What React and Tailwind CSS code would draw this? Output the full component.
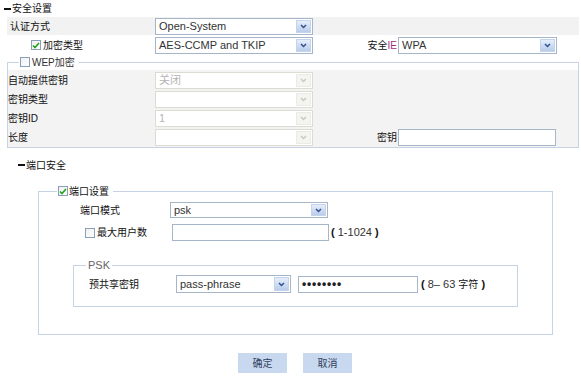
import React from 'react';

// collapse bar in front of a section title
function Dash() {
    return <span className="inline-block w-[7px] h-[2px] bg-[#111] mr-[1px]" />;
}

function Chevron({ disabled }) {
    return (
        <svg width="7" height="5" viewBox="0 0 7 5">
            <path d="M1 1l2.5 2.5L6 1" fill="none" stroke={disabled ? '#c9c9c2' : '#2f4f8f'} strokeWidth="1.5" />
        </svg>
    );
}

function Select({ className = '', value, disabled = false }) {
    return (
        <div className={`flex bg-white border ${disabled ? 'border-[#dcdcd3]' : 'border-[#a7b5c8]'} ${className}`}>
            <div className={`flex-1 flex items-center pl-[3px] text-[11px] ${disabled ? 'text-[#b4b4b4]' : 'text-[#333]'}`}>
                {value}
            </div>
            <div className="p-[1px] flex">
                <div
                    className={`w-[15px] flex items-center justify-center border ${
                        disabled
                            ? 'bg-[#f4f4f0] border-[#ebebe5]'
                            : 'bg-linear-to-b from-[#e6eefa] to-[#b8cceb] border-[#c4d4ec]'
                    }`}
                >
                    <Chevron disabled={disabled} />
                </div>
            </div>
        </div>
    );
}

function Input({ className = '', children }) {
    return (
        <div className={`flex items-center bg-white border border-[#a7b5c8] pl-[3px] ${className}`}>
            {children}
        </div>
    );
}

function Checkbox({ checked = false }) {
    return (
        <span className="w-[10px] h-[10px] border border-[#8a9fb8] bg-linear-to-br from-[#f0f0f0] to-white flex items-center justify-center shrink-0">
            {checked && (
                <svg width="8" height="7" viewBox="0 0 8 7">
                    <path d="M1 3.5l2 2L7 1" fill="none" stroke="#22a322" strokeWidth="1.7" />
                </svg>
            )}
        </span>
    );
}

export default function App() {
    return (
        <div className="w-[581px] h-[378px] bg-white overflow-hidden text-[10px] text-[#111] font-['Liberation_Sans','Noto_Sans_CJK_SC',sans-serif]">
            {/* 安全设置 */}
            <div className="h-[17px] pl-[4px] flex items-center">
                <Dash />
                <span>安全设置</span>
            </div>

            <div className="ml-[7px] w-[572px]">
                <div className="h-[18px] bg-[#f2f2f2] flex items-center">
                    <div className="w-[148px] pl-[3px]">认证方式</div>
                    <Select className="w-[158px] h-[17px]" value="Open-System" />
                </div>

                <div className="h-[20px] flex items-center">
                    <div className="w-[148px] pl-[24px] flex items-center gap-[2px]">
                        <Checkbox checked />
                        <span>加密类型</span>
                    </div>
                    <Select className="w-[158px] h-[17px]" value="AES-CCMP and TKIP" />
                    <div className="w-[85px] text-right pr-[1px]">
                        安全<span className="text-[#a0307f]">IE</span>
                    </div>
                    <Select className="w-[159px] h-[17px]" value="WPA" />
                </div>

                {/* WEP加密 */}
                <fieldset className="mt-[1px] border border-[#c6d3e4]">
                    <legend className="ml-[11px] pl-[1px] pr-[4px] h-[12px] flex items-center gap-[2px]">
                        <Checkbox />
                        <span className="text-[#333]">WEP加密</span>
                    </legend>
                    <div className="mt-[2px] pt-[1px] bg-[#f3f3f3]">
                        {[
                            ['自动提供密钥', '关闭'],
                            ['密钥类型', ''],
                            ['密钥ID', '1'],
                        ].map(([label, value]) => (
                            <div key={label} className="h-[19px] flex items-center">
                                <div className="w-[147px]">{label}</div>
                                <Select className="w-[158px] h-[17px]" value={value} disabled />
                            </div>
                        ))}
                        <div className="h-[19px] flex items-center">
                            <div className="w-[147px]">长度</div>
                            <Select className="w-[158px] h-[17px]" value="" disabled />
                            <div className="w-[85px] text-right pr-[1px]">密钥</div>
                            <Input className="w-[158px] h-[17px]" />
                        </div>
                    </div>
                </fieldset>
            </div>

            {/* 端口安全 */}
            <div className="mt-[10px] h-[14px] pl-[18px] flex items-center">
                <Dash />
                <span>端口安全</span>
            </div>

            <fieldset className="mt-[13px] ml-[38px] w-[515px] border border-[#c6d3e4] pb-[27px]">
                <legend className="ml-[18px] pl-[1px] pr-[4px] h-[12px] flex items-center gap-[1px]">
                    <Checkbox checked />
                    <span>端口设置</span>
                </legend>

                <div className="mt-[5px] h-[16px] flex items-center">
                    <div className="w-[131px] pl-[41px]">端口模式</div>
                    <Select className="w-[158px] h-[16px]" value="psk" />
                </div>

                <div className="mt-[6px] h-[17px] flex items-center">
                    <div className="w-[133px] pl-[46px] flex items-center gap-[2px]">
                        <Checkbox />
                        <span>最大用户数</span>
                    </div>
                    <Input className="w-[157px] h-[17px]" />
                    <span className="ml-[2px] text-[11px] text-[#333]">
                        <b className="text-[#111]">(</b> 1-1024 <b className="text-[#111]">)</b>
                    </span>
                </div>

                {/* PSK */}
                <fieldset className="mt-[18px] ml-[34px] w-[445px] border border-[#c6d3e4] pb-[13px]">
                    <legend className="ml-[12px] px-[2px] h-[12px] flex items-center text-[11px] text-[#666]">
                        PSK
                    </legend>
                    <div className="mt-[4px] h-[18px] flex items-center">
                        <div className="w-[102px] pl-[15px]">预共享密钥</div>
                        <Select className="w-[115px] h-[18px]" value="pass-phrase" />
                        <Input className="ml-[7px] w-[120px] h-[17px]">
                            <span className="text-[12px] font-bold tracking-[0.8px] text-[#222] leading-none">••••••••</span>
                        </Input>
                        <span className="ml-[3px] text-[11px] text-[#333]">
                            <b className="text-[#111]">(</b> 8– 63 <span className="text-[10px] text-[#111]">字符</span>{' '}
                            <b className="text-[#111]">)</b>
                        </span>
                    </div>
                </fieldset>
            </fieldset>

            {/* buttons */}
            <div className="mt-[18px] ml-[238px] flex gap-[16px]">
                <button className="w-[49px] h-[20px] bg-[#c8d8ee] text-[#2f3f5f] text-[10px]">确定</button>
                <button className="w-[49px] h-[20px] bg-[#c8d8ee] text-[#2f3f5f] text-[10px]">取消</button>
            </div>
        </div>
    );
}
